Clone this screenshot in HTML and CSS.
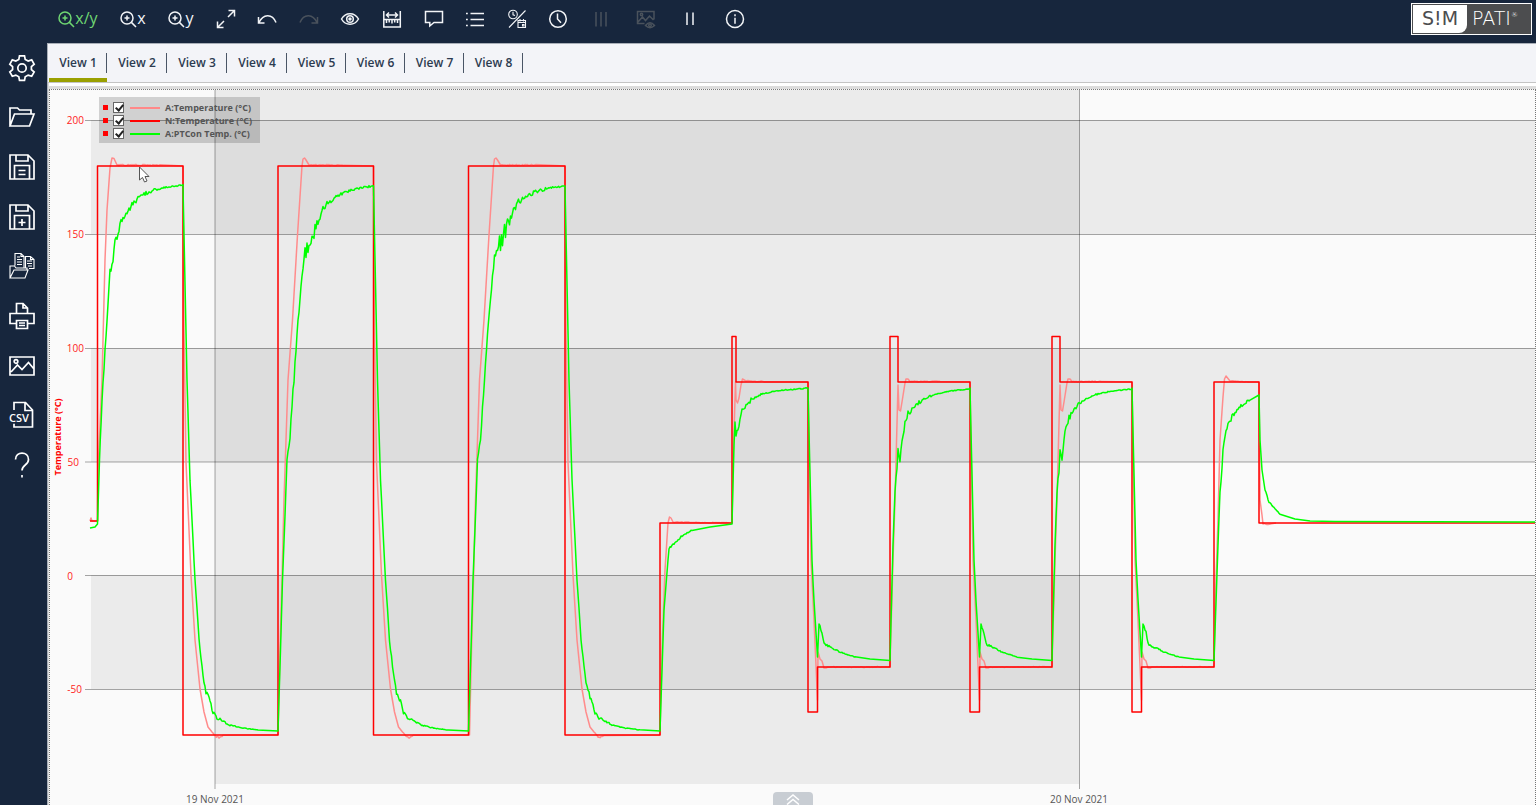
FILE: index.html
```html
<!DOCTYPE html>
<html lang="en">
<head>
<meta charset="UTF-8" />
<meta name="viewport" content="width=device-width, initial-scale=1" />
<title>SIMPATI</title>
<link rel="stylesheet" href="styles.css">
</head>
<body>
  <header class="topbar">
    <div class="tools zoom-tools">
      <button class="active" aria-label="Zoom x and y"><svg width="17" height="17" viewBox="0 0 17 17"><circle cx="7" cy="7" r="6"/><path d="M11.4 11.4L16 16M7 4.5v5M4.5 7h5"/></svg><span>x/y</span></button>
      <button aria-label="Zoom x"><svg width="17" height="17" viewBox="0 0 17 17"><circle cx="7" cy="7" r="6"/><path d="M11.4 11.4L16 16M7 4.5v5M4.5 7h5"/></svg><span>x</span></button>
      <button aria-label="Zoom y"><svg width="17" height="17" viewBox="0 0 17 17"><circle cx="7" cy="7" r="6"/><path d="M11.4 11.4L16 16M7 4.5v5M4.5 7h5"/></svg><span>y</span></button>
    </div>
    <div class="tools edit-tools">
      <button aria-label="Fit"><svg width="20" height="20" viewBox="0 0 20 20"><path d="M12 8l6.500-6.500M12.500 1.500h6v6M8 12l-6.500 6.500M1.500 12.500v6h6"/></svg></button>
      <button aria-label="Undo"><svg width="20" height="20" viewBox="0 0 20 20"><path d="M1.500 8v6h6M2 13.500C6 5 15 4 19 13.500"/></svg></button>
      <button class="off" aria-label="Redo" disabled><svg width="20" height="20" viewBox="0 0 20 20"><path d="M18.500 8v6h-6M18 13.500C14 5 5 4 1 13.500"/></svg></button>
      <button aria-label="Show"><svg width="20" height="20" viewBox="0 0 20 20"><path d="M1.500 10C5.500 3 14.500 3 18.500 10C14.500 17 5.500 17 1.500 10z"/><circle cx="10" cy="10" r="3.300"/><circle cx="10" cy="10" r="1" class="solid"/></svg></button>
      <button aria-label="Measure"><svg width="20" height="20" viewBox="0 0 20 20"><path d="M1.800 2v16h16.500V2M1.800 10.500h16.500M5 6h10M7 3.500L4.500 6L7 8.500M13 3.500L15.500 6L13 8.500M4.500 11v3M7.200 11v2.500M10 11v3.500M12.700 11v2.500M15.500 11v3"/></svg></button>
      <button aria-label="Comment"><svg width="20" height="20" viewBox="0 0 20 20"><path d="M1.500 2.500h17v11H10L5.800 17v-3.500H1.500z"/></svg></button>
      <button aria-label="List"><svg width="20" height="20" viewBox="0 0 20 20"><path d="M1 4.500h1.800M5.500 4.500h13.500M1 10.500h1.800M5.500 10.500h13.500M1 16.500h1.800M5.500 16.500h13.500"/></svg></button>
      <button aria-label="Time or date"><svg class="fine" width="20" height="20" viewBox="0 0 20 20"><circle cx="6" cy="5.500" r="4.300"/><path d="M6 2.800v3l2 .8M18.500 1.500L2 18.500M11 11.500h7.500v7H11zM11 13.500h7.500M13 10v2.500M16.500 10v2.500M15.500 15.500h1.500v1.500h-1.500z"/></svg></button>
      <button aria-label="Time"><svg width="20" height="20" viewBox="0 0 20 20"><circle cx="10" cy="10" r="8.300"/><path d="M9.500 4.500V10l3.500 3.800"/></svg></button>
    </div>
    <div class="tools state-tools">
      <button class="off" aria-label="Columns" disabled><svg width="20" height="20" viewBox="0 0 20 20"><path d="M5 3v14.500M10 3v14.500M15 3v14.500"/></svg></button>
      <button class="off" aria-label="Picture preview" disabled><svg width="20" height="20" viewBox="0 0 20 20"><path d="M8.500 14.500h-7v-12h16.500v8M2 13l4.500-5l3 3.500L13.500 7l4 4M9.500 16.500q4.500-5.500 9 0q-4.500 4.500-9 0z"/><circle cx="5.500" cy="5.500" r="1.200"/><circle cx="14" cy="16.300" r="1.300"/></svg></button>
      <button aria-label="Pause"><svg width="20" height="20" viewBox="0 0 20 20"><path d="M7 3.500v12.500M13 3.500v12.500"/></svg></button>
      <button aria-label="Info"><svg width="20" height="20" viewBox="0 0 20 20"><circle cx="10" cy="10" r="8.500"/><path d="M10 8.800v6M10 5.300v1.900"/></svg></button>
    </div>
    <div class="logo"><span class="logo-sim">S!M</span><span class="logo-pati">PATI<sup>®</sup></span></div>
  </header>

  <nav class="sidebar">
    <button aria-label="Settings"><svg width="28" height="28" viewBox="0 0 28 28"><path d="M11.500 1.800h5l.7 3.600l3 1.700l3.500-1.200l2.500 4.300l-2.800 2.400v3l2.800 2.400l-2.500 4.300l-3.500-1.200l-3 1.700l-.7 3.500h-5l-.7-3.500l-3-1.700l-3.500 1.200l-2.500-4.300l2.800-2.400v-3L1.800 10.200l2.500-4.300l3.500 1.200l3-1.700z"/><circle cx="14" cy="14" r="4.200"/></svg></button>
    <button aria-label="Open"><svg width="28" height="28" viewBox="0 0 28 28"><path d="M2 23V5h7.500l2 2h11.500v4M2 23L6.500 11H26l-4.500 12z"/></svg></button>
    <button aria-label="Save"><svg width="28" height="28" viewBox="0 0 28 28"><path d="M2 2h18l6 6v18H2zM8 2v6h12V2M6.500 26V12.500h15V26M10.500 17.500h7M10.500 21.500h7"/></svg></button>
    <button aria-label="Save as"><svg width="28" height="28" viewBox="0 0 28 28"><path d="M2 2h18l6 6v18H2zM8 2v6h12V2M6.500 26V12.500h15V26M14 16v7M10.500 19.500h7"/></svg></button>
    <button aria-label="Open several"><svg class="fine" width="28" height="28" viewBox="0 0 28 28"><path d="M2 26V14h4.500l1.500 2h11v2M2 26l4-8h14l-3 8zM7 13.500V1.500h6l3 3v11M13 1.500v3h3M9 5h3M9 7.500h5M9 10h5M9 12.500h5M17.500 15.500V4.500h5l3.500 3v9h-5M22.500 4.500v3H26M19 9h5M19 11.500h5M20 14h4"/></svg></button>
    <button aria-label="Print"><svg width="28" height="28" viewBox="0 0 28 28"><path d="M8 21.500H2V11.500h24v10h-6M8.500 11.500v-10H15l4.500 4.500v5.500M15 1.500V6h4.500M8.500 18.500h11v8h-11zM11 21h6M11 23.500h6"/></svg></button>
    <button aria-label="Export picture"><svg width="28" height="28" viewBox="0 0 28 28"><path d="M2 5h24v18H2zM3 20l6.500-7l4.500 4.500l6.500-7L26 17"/><circle cx="8" cy="9.500" r="1.800"/></svg></button>
    <button aria-label="Export CSV"><svg width="28" height="28" viewBox="0 0 28 28"><path d="M6 9V1.500h11.500l7 7.500v17H6v-3.500M17 2v7.500h7"/><text class="csv" x="1" y="21">CSV</text></svg></button>
    <button aria-label="Help"><svg width="28" height="28" viewBox="0 0 28 28"><path d="M7.500 8.500c0-8.500 13-8.500 13 0c0 6-6.500 5-6.500 11M14 24v2.500"/></svg></button>
  </nav>

  <main class="main">
    <div class="tabs" role="tablist">
      <button role="tab" class="tab selected" aria-selected="true">View 1</button>
      <button role="tab" class="tab">View 2</button>
      <button role="tab" class="tab">View 3</button>
      <button role="tab" class="tab">View 4</button>
      <button role="tab" class="tab">View 5</button>
      <button role="tab" class="tab">View 6</button>
      <button role="tab" class="tab">View 7</button>
      <button role="tab" class="tab">View 8</button>
    </div>

    <section class="chart">
      <div class="legend">
        <label class="legend-row"><i></i><input type="checkbox" checked><b class="line-actual"></b><span>A:Temperature (°C)</span></label>
        <label class="legend-row"><i></i><input type="checkbox" checked><b class="line-nominal"></b><span>N:Temperature (°C)</span></label>
        <label class="legend-row"><i></i><input type="checkbox" checked><b class="line-ptcon"></b><span>A:PTCon Temp. (°C)</span></label>
      </div>

      <svg class="plot" viewBox="50 90 1485 715" preserveAspectRatio="xMinYMin meet">
        <g class="band">
          <rect x="91" y="120" width="1445" height="114"/>
          <rect x="91" y="348" width="1445" height="114"/>
          <rect x="91" y="575" width="1445" height="114"/>
          <rect x="215" y="90" width="864" height="694"/>
        </g>
        <path class="grid" d="M85 120.500H1536M85 234.500H1536M85 348.500H1536M85 462H1536M85 575.500H1536M85 689.500H1536M215 90V789M1079.500 90V789"/>
        <g class="y-ticks">
          <text x="84" y="124">200</text>
          <text x="84" y="238">150</text>
          <text x="84" y="352">100</text>
          <text x="79" y="466">50</text>
          <text x="73" y="580">0</text>
          <text x="82" y="693">-50</text>
        </g>
        <g class="x-ticks">
          <text x="215" y="803">19 Nov 2021</text>
          <text x="1079" y="803">20 Nov 2021</text>
        </g>
        <text class="axis-title" transform="translate(61 437) rotate(-90)">Temperature (°C)</text>
        <path id="actual" class="series actual"/>
        <path id="nominal" class="series nominal"/>
        <path id="ptcon" class="series ptcon"/>
        <path class="cursor" d="M139.500 167v13l3-2.500l2 4.500l2.500-1l-2-4.500h4z"/>
      </svg>

      <button class="expand" aria-label="Show details"><svg width="16" height="12" viewBox="0 0 16 12"><path d="M2 7l6-5l6 5M2 11.500l6-5l6 5"/></svg></button>
    </section>
  </main>

<script>
  // nominal value: pairs of x and level, drawn as steps
  const steps = [
    [90, 521], [97.5, 166], [183, 735], [278, 166], [373.5, 735], [468.5, 166], [565, 735],
    [660, 523], [732, 336.5], [736, 382], [808, 712], [817.5, 667], [890, 336.5], [898, 382],
    [970, 712], [979.5, 667], [1052, 336.5], [1060, 382], [1132, 712], [1141.5, 667],
    [1214, 382], [1259, 523], [1536, 523]
  ];

  // curve parts, x relative to the step: [x, y, noise]
  const actualHot = [[0, 735], [2, 650], [4, 580], [6, 500], [10, 380], [14.5, 320], [19.5, 235], [24, 166], [25, 159], [26.5, 158], [28, 160], [31, 165], [66, 165, 0.6], [95, 166]];
  const actualCold = [[0, 166], [1, 330], [3, 462], [8, 575], [12, 640], [17, 689], [21, 712], [25, 727], [29, 732], [33, 737, 0.5], [36, 737.5, 1], [40, 735.5, 0.5], [95, 735]];
  const actualPeak = [[0, 666], [3, 560], [5, 500], [8, 385], [9, 410], [10.5, 411], [12, 402], [15, 383], [16, 379], [18, 379], [20, 381.5], [50, 381.5, 0.5], [80, 382]];
  const actualDip = [[0, 382], [3, 560], [6, 620], [9.5, 700], [10, 652], [12, 659], [14, 661], [16, 668], [18, 668], [20, 667], [82, 667, 0.4]];
  const ptconHot = [[0, 731], [2.5, 650], [4.5, 580], [7, 516], [9, 460, 1], [12, 440, 2], [14, 405, 4], [17, 365, 5], [20, 320, 3], [23, 288, 5], [26, 256, 4], [30, 246, 7], [34, 237, 9], [37, 230, 9], [41, 219, 6], [45, 211, 5], [50, 202, 3], [58, 197, 2.5], [66, 192, 2], [77, 189, 1.5], [87, 187, 1], [95, 186, 1]];
  const ptconCold = [[0, 186], [4, 380], [7, 480, 1], [12, 580, 1], [16, 640, 2], [20, 675, 2], [23, 692, 3], [27, 702, 3], [30, 712, 2], [34, 718, 2], [38, 720, 1.5], [47, 725, 1], [60, 728, 0.5], [75, 730, 0.3], [95, 731]];
  const ptconPeak = [[0, 660], [3, 545], [5, 490, 3], [7, 470, 3], [8, 450, 2], [10, 461, 2], [12, 440, 3], [15, 425, 4], [18, 415, 4], [25, 406, 2], [32, 400, 2], [45, 394, 1], [60, 391, 0.5], [80, 389, 0.5]];
  const ptconDip = [[0, 388], [4, 560], [6, 600, 2], [9.5, 657], [11, 624], [14, 633, 2], [16, 644, 2], [22, 647, 1], [32, 652, 0.7], [47, 657, 0.4], [62, 659], [82, 660.5]];

  const at = (x, part) => part.map(p => [p[0] + x, p[1], p[2] || 0]);

  const actual = [
    [90, 521], [91, 518], [92, 521], [97.5, 521], [98, 470], [102, 380], [105, 260], [107, 210], [110, 168],
    [112, 158], [114, 158.5], [117, 165], [160, 165, 0.6],
    ...at(183, actualCold), ...at(278, actualHot), ...at(373.5, actualCold), ...at(469.5, actualHot), ...at(565, actualCold),
    [660, 735], [662, 650], [665, 570], [668, 523], [669.5, 517], [671, 518], [673, 522], [732, 523, 0.4],
    [733.5, 450], [735.5, 382], [736, 400], [737.5, 403], [739, 398], [741, 385], [742.5, 379], [746, 381], [765, 381.5, 0.5],
    ...at(808, actualDip), ...at(890, actualPeak), ...at(970, actualDip), ...at(1052, actualPeak), ...at(1132, actualDip),
    [1214, 666], [1216, 580], [1218, 520], [1220, 440], [1223, 397], [1224.5, 379], [1226, 376], [1230, 381], [1250, 382, 0.4],
    [1259, 382], [1260, 500], [1262, 515], [1263, 524], [1268, 524, 0.7], [1276, 523]
  ];

  const ptcon = [
    [90, 528], [95, 527], [97.5, 524], [99.5, 460], [102, 403, 2], [105, 350, 4], [107, 320, 3], [110, 272, 3],
    [113, 263, 4], [115, 240, 4], [118, 236, 6], [122, 222, 6], [128, 210, 4], [134, 203, 4], [139, 196, 3], [147, 193, 2], [160, 188, 1.5], [183, 185, 0.7],
    ...at(183, ptconCold), ...at(278, ptconHot), ...at(373.5, ptconCold), ...at(468.5, ptconHot), ...at(565, ptconCold),
    [660, 731], [664, 610], [668, 560], [669, 549], [672, 545, 2], [675, 543, 1], [682, 536, 1], [692, 530, 0.5], [710, 527], [732, 524],
    [734, 445], [735, 422], [736, 436], [739, 425, 2], [742, 410, 1], [744, 408, 2], [752, 399, 2], [762, 394, 1], [775, 391, 0.5], [808, 388, 0.5],
    ...at(808, ptconDip), ...at(890, ptconPeak), ...at(970, ptconDip), ...at(1052, ptconPeak), ...at(1132, ptconDip),
    [1214, 660], [1218, 545], [1220, 493, 2], [1223, 450, 4], [1225, 435, 3], [1228, 423, 4], [1235, 412, 3], [1243, 404, 2], [1250, 400, 1.5], [1259, 395],
    [1260, 440], [1262, 470], [1265, 490], [1269, 502, 1], [1280, 514, 0.4], [1295, 519], [1310, 521], [1335, 521.5], [1536, 522]
  ];

  // small fixed generator, so the measured noise is always the same
  let seed = 7;
  function noise() {
    seed = (seed * 1103515245 + 12345) % 2147483648;
    return seed / 1073741824 - 1;
  }

  function curve(points) {
    let d = `M${points[0][0]} ${points[0][1]}`;
    for (let i = 1; i < points.length; i++) {
      const [x0, y0] = points[i - 1];
      const [x1, y1, n] = points[i];
      const parts = n ? Math.max(1, Math.round(x1 - x0)) : 1;
      for (let k = 1; k <= parts; k++) {
        const x = x0 + (x1 - x0) * k / parts;
        const y = y0 + (y1 - y0) * k / parts + (n || 0) * noise();
        d += `L${x.toFixed(1)} ${y.toFixed(1)}`;
      }
    }
    return d;
  }

  function stepLine(points) {
    let d = `M${points[0][0]} ${points[0][1]}`;
    for (let i = 1; i < points.length; i++) d += `H${points[i][0]}V${points[i][1]}`;
    return d;
  }

  document.getElementById('nominal').setAttribute('d', stepLine(steps));
  document.getElementById('actual').setAttribute('d', curve(actual));
  document.getElementById('ptcon').setAttribute('d', curve(ptcon));
</script>

</body>
</html>
```
FILE: styles.css
```css
* {
  box-sizing: border-box;
}
body {
  margin: 0;
  height: 100vh;
  display: grid;
  grid-template-columns: 47px 1fr;
  grid-template-rows: 43px 1fr;
  background: #17263d;
  font-family: "Open Sans", "Noto Sans", sans-serif;
  overflow: hidden;
}
button {
  padding: 0;
  border: none;
  background: none;
  font-family: inherit;
  color: inherit;
  cursor: pointer;
}
button svg {
  display: block;
  fill: none;
  stroke: currentColor;
  stroke-width: 1.5;
}
button svg.fine { stroke-width: 1.1; }
button svg .solid { fill: currentColor; }

/* top bar */
.topbar {
  grid-column: 1 / 3;
  display: flex;
  padding: 0 4px 5px 47px;
  color: #f2f4f7;
}
.tools { display: grid; }
.zoom-tools { grid-template-columns: 62px 48px 48px; }
.edit-tools { width: 374px; grid-template-columns: repeat(9, 1fr); }
.state-tools { width: 178px; grid-template-columns: repeat(4, 1fr); }
.tools button {
  display: flex;
  align-items: center;
  justify-content: center;
}
.tools span {
  font-size: 16px;
  line-height: 20px;
  padding-bottom: 2px;
}
.tools .active { color: #6fd672; }
.tools .off { color: #4a525c; }
.logo {
  display: flex;
  width: 121px;
  height: 32px;
  margin: 3px 0 0 auto;
  padding: 1px;
  border: 1px solid #fff;
  background: #4c4d4f;
  font-family: "DejaVu Sans", sans-serif;
  font-size: 19px;
  line-height: 27px;
}
.logo-sim {
  width: 54px;
  text-align: center;
  background: #fff;
  color: #4c4d4f;
  border-bottom-right-radius: 8px;
}
.logo-pati {
  flex: 1;
  padding-left: 5px;
  font-weight: 200;
  color: #fff;
}
.logo sup {
  font-size: 7px;
  line-height: 8px;
  vertical-align: 8px;
}

/* left bar */
.sidebar {
  display: grid;
  grid-template-rows: repeat(9, 1fr);
  height: 447px;
  color: #fff;
}
.sidebar button {
  display: flex;
  align-items: center;
  padding-left: 8px;
}
.sidebar svg { stroke-width: 1.7; }
.csv {
  fill: currentColor;
  stroke: #17263d;
  stroke-width: 3px;
  paint-order: stroke;
  font-size: 11px;
  font-weight: 600;
}

/* tabs */
.main {
  display: flex;
  flex-direction: column;
  min-width: 0;
  min-height: 0;
  border-left: 1px solid #a9afb8;
  background: #dcdcdc;
}
.tabs {
  display: grid;
  grid-template-columns: repeat(8, 59px);
  column-gap: 0;
  justify-content: start;
  height: 40px;
  flex-shrink: 0;
  padding-left: 1px;
  border-top: 1px solid #a9afb8;
  border-bottom: 1px solid #c4c4c4;
  background: #f3f4f8;
}
.tabs {
  grid-template-columns: 58px repeat(3, 60px) repeat(4, 59px);
}
.tab {
  position: relative;
  padding-bottom: 2px;
  font-size: 12px;
  font-weight: 600;
  color: #2c3b50;
}
.tab::after {
  content: "";
  position: absolute;
  right: 0;
  top: 9px;
  width: 1px;
  height: 20px;
  background: #4a5666;
}
.tab.selected {
  box-shadow: inset 0 -4px #9aa000;
}

/* chart */
.chart {
  position: relative;
  flex: 1;
  min-height: 0;
  margin: 6px 0 0 1px;
  border: 1px dotted #777;
  border-bottom: none;
  background: #fafafa;
  box-shadow: 0 -3px #dcdcdc, 0 -6px #fff;
}
.plot {
  display: block;
  width: 100%;
  height: 100%;
}
.band { fill: rgba(0, 0, 0, 0.058); }
.grid { stroke: rgba(0, 0, 0, 0.35); fill: none; }
.plot text { font-size: 10px; }
.y-ticks { fill: #f22; text-anchor: end; }
.x-ticks { fill: #555; text-anchor: middle; }
.plot .axis-title {
  fill: #f00;
  font-size: 9px;
  font-weight: 700;
  text-anchor: middle;
}
.series {
  fill: none;
  stroke-width: 1.5;
  stroke-linejoin: round;
}
.nominal { stroke: #f00; }
.actual { stroke: #ff8c8c; }
.ptcon { stroke: #0f0; }
.cursor { fill: #fff; stroke: #555; stroke-width: 1; }

.legend {
  position: absolute;
  left: 49px;
  top: 7px;
  width: 161px;
  padding: 4px 0 3px 4px;
  background: rgba(0, 0, 0, 0.16);
}
.legend-row {
  display: flex;
  align-items: center;
  height: 13px;
  font-size: 9px;
  line-height: 13px;
  font-weight: 700;
  color: #555;
}
.legend-row i {
  width: 5px;
  height: 5px;
  background: #f00;
}
.legend-row input {
  appearance: none;
  position: relative;
  width: 11px;
  height: 11px;
  margin: 0 6px 0 5px;
  border: 1px solid #666;
  background: #fff;
}
.legend-row input:checked::after {
  content: "";
  position: absolute;
  left: 3px;
  top: 0;
  width: 3px;
  height: 6px;
  border: solid #222;
  border-width: 0 2px 2px 0;
  transform: rotate(40deg);
}
.legend-row b {
  width: 30px;
  height: 2px;
  margin-right: 5px;
}
.line-actual { background: #f88; }
.line-nominal { background: #f00; }
.line-ptcon { background: #0f0; }

.expand {
  position: absolute;
  left: 50%;
  bottom: 0;
  width: 40px;
  height: 13px;
  margin-left: -20px;
  border-radius: 4px 4px 0 0;
  background: #c8cdd3;
  color: #fff;
}
.expand svg { margin: 1px auto 0; }
```
